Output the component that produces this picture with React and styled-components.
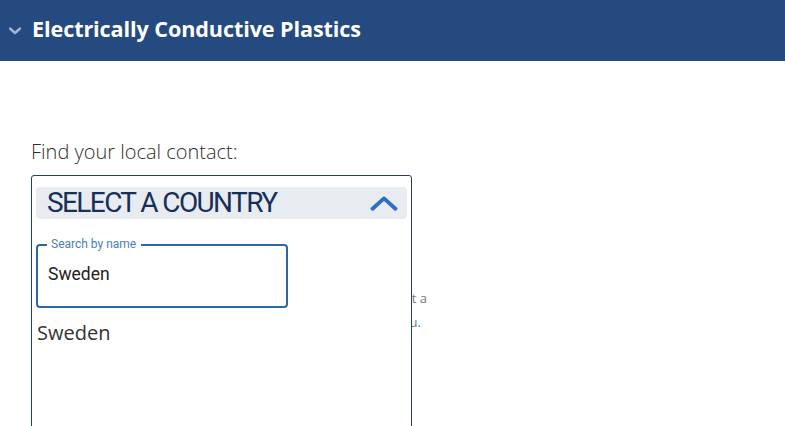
import React from "react";
import styled, { createGlobalStyle } from "styled-components";

const Global = createGlobalStyle`
  html, body { margin: 0; padding: 0; background: #ffffff; overflow: hidden; }
  body { font-family: "Open Sans", sans-serif; }
  * { box-sizing: border-box; }
`;

const Page = styled.div`
  height: 426px;
  overflow: hidden;
`;

const Header = styled.header`
  height: 61px;
  background: #244a7f;
  display: flex;
  align-items: center;
  padding-left: 9px;
  gap: 11px;
`;

const Title = styled.h1`
  margin: 0;
  color: #ffffff;
  font-family: "Open Sans", sans-serif;
  font-weight: 700;
  font-size: 21.6px;
  line-height: 1;
  padding-bottom: 3px;
  letter-spacing: -0.1px;
`;

const Main = styled.main`
  padding: 79px 31px 0 31px;
`;

const Label = styled.div`
  font-family: "Open Sans", sans-serif;
  font-size: 20px;
  line-height: 24px;
  color: #2f2f2f;
  font-weight: 300;
  margin-bottom: 11px;
`;

const Stage = styled.div`
  position: relative;
  height: 251px;
`;

const Behind = styled.p`
  margin: 0;
  position: absolute;
  right: calc(100% - 396px);
  top: 111px;
  font-family: "Open Sans", sans-serif;
  font-size: 13px;
  line-height: 24px;
  color: #777777;
  text-align: right;
  white-space: nowrap;
`;

const BehindLine = styled.span`
  display: block;
  padding-right: ${(p) => p.$inset || 0}px;
`;

const Dropdown = styled.div`
  position: absolute;
  left: 0;
  top: 0;
  width: 381px;
  height: 260px;
  background: #ffffff;
  border: 1px solid #2a3e56;
  border-radius: 3px 3px 0 0;
  padding: 11px 4px 0 4px;
  display: flex;
  flex-direction: column;
`;

const Toggle = styled.div`
  height: 32px;
  background: #e8ebef;
  border-radius: 4px;
  display: flex;
  align-items: center;
  justify-content: space-between;
  padding: 0 9px 0 11px;
`;

const ToggleText = styled.span`
  font-family: "Roboto", sans-serif;
  font-size: 28px;
  line-height: 32px;
  color: #17305a;
  letter-spacing: -1.6px;
`;

const SearchBox = styled.div`
  position: relative;
  margin-top: 25px;
  width: 252px;
  height: 64px;
  border: 2px solid #2e68a1;
  border-radius: 4px;
  padding: 0 10px;
  display: flex;
  align-items: center;
`;

const Legend = styled.span`
  position: absolute;
  left: 9px;
  top: -8px;
  background: #ffffff;
  font-family: "Roboto", sans-serif;
  font-size: 12px;
  line-height: 13px;
  color: #4b80b5;
  padding: 0 5px 0 4px;
`;

const SearchInput = styled.input`
  border: none;
  outline: none;
  background: transparent;
  font-family: "Roboto", sans-serif;
  font-size: 17.5px;
  color: #222222;
  width: 100%;
  padding: 0;
  margin: 0 0 4px 0;
`;

const Results = styled.ul`
  list-style: none;
  margin: 11px 0 0 0;
  padding: 0;
`;

const ResultItem = styled.li`
  font-family: "Open Sans", sans-serif;
  font-size: 20px;
  line-height: 28px;
  color: #333333;
  padding-left: 1px;
`;

const Chevron = ({ dir, color, size, stroke }) => (
  <svg width={size[0]} height={size[1]} viewBox="0 0 24 14" fill="none">
    <path
      d={dir === "up" ? "M2 12 L12 3 L22 12" : "M2 2 L12 11 L22 2"}
      stroke={color}
      strokeWidth={stroke}
      strokeLinecap="round"
      strokeLinejoin="round"
    />
  </svg>
);

export default function App() {
  return (
    <Page>
      <Global />
      <Header>
        <Chevron dir="down" color="#a3b3cd" size={[12, 8]} stroke={5} />
        <Title>Electrically Conductive Plastics</Title>
      </Header>
      <Main>
        <Label>Find your local contact:</Label>
        <Stage>
          <Behind>
            <BehindLine>Select your country to get a</BehindLine>
            <BehindLine $inset={6}>person who can help you.</BehindLine>
          </Behind>
          <Dropdown>
            <Toggle>
              <ToggleText>SELECT A COUNTRY</ToggleText>
              <Chevron dir="up" color="#2a70c2" size={[28, 16]} stroke={3.4} />
            </Toggle>
            <SearchBox>
              <Legend>Search by name</Legend>
              <SearchInput defaultValue="Sweden" />
            </SearchBox>
            <Results>
              <ResultItem>Sweden</ResultItem>
            </Results>
          </Dropdown>
        </Stage>
      </Main>
    </Page>
  );
}
